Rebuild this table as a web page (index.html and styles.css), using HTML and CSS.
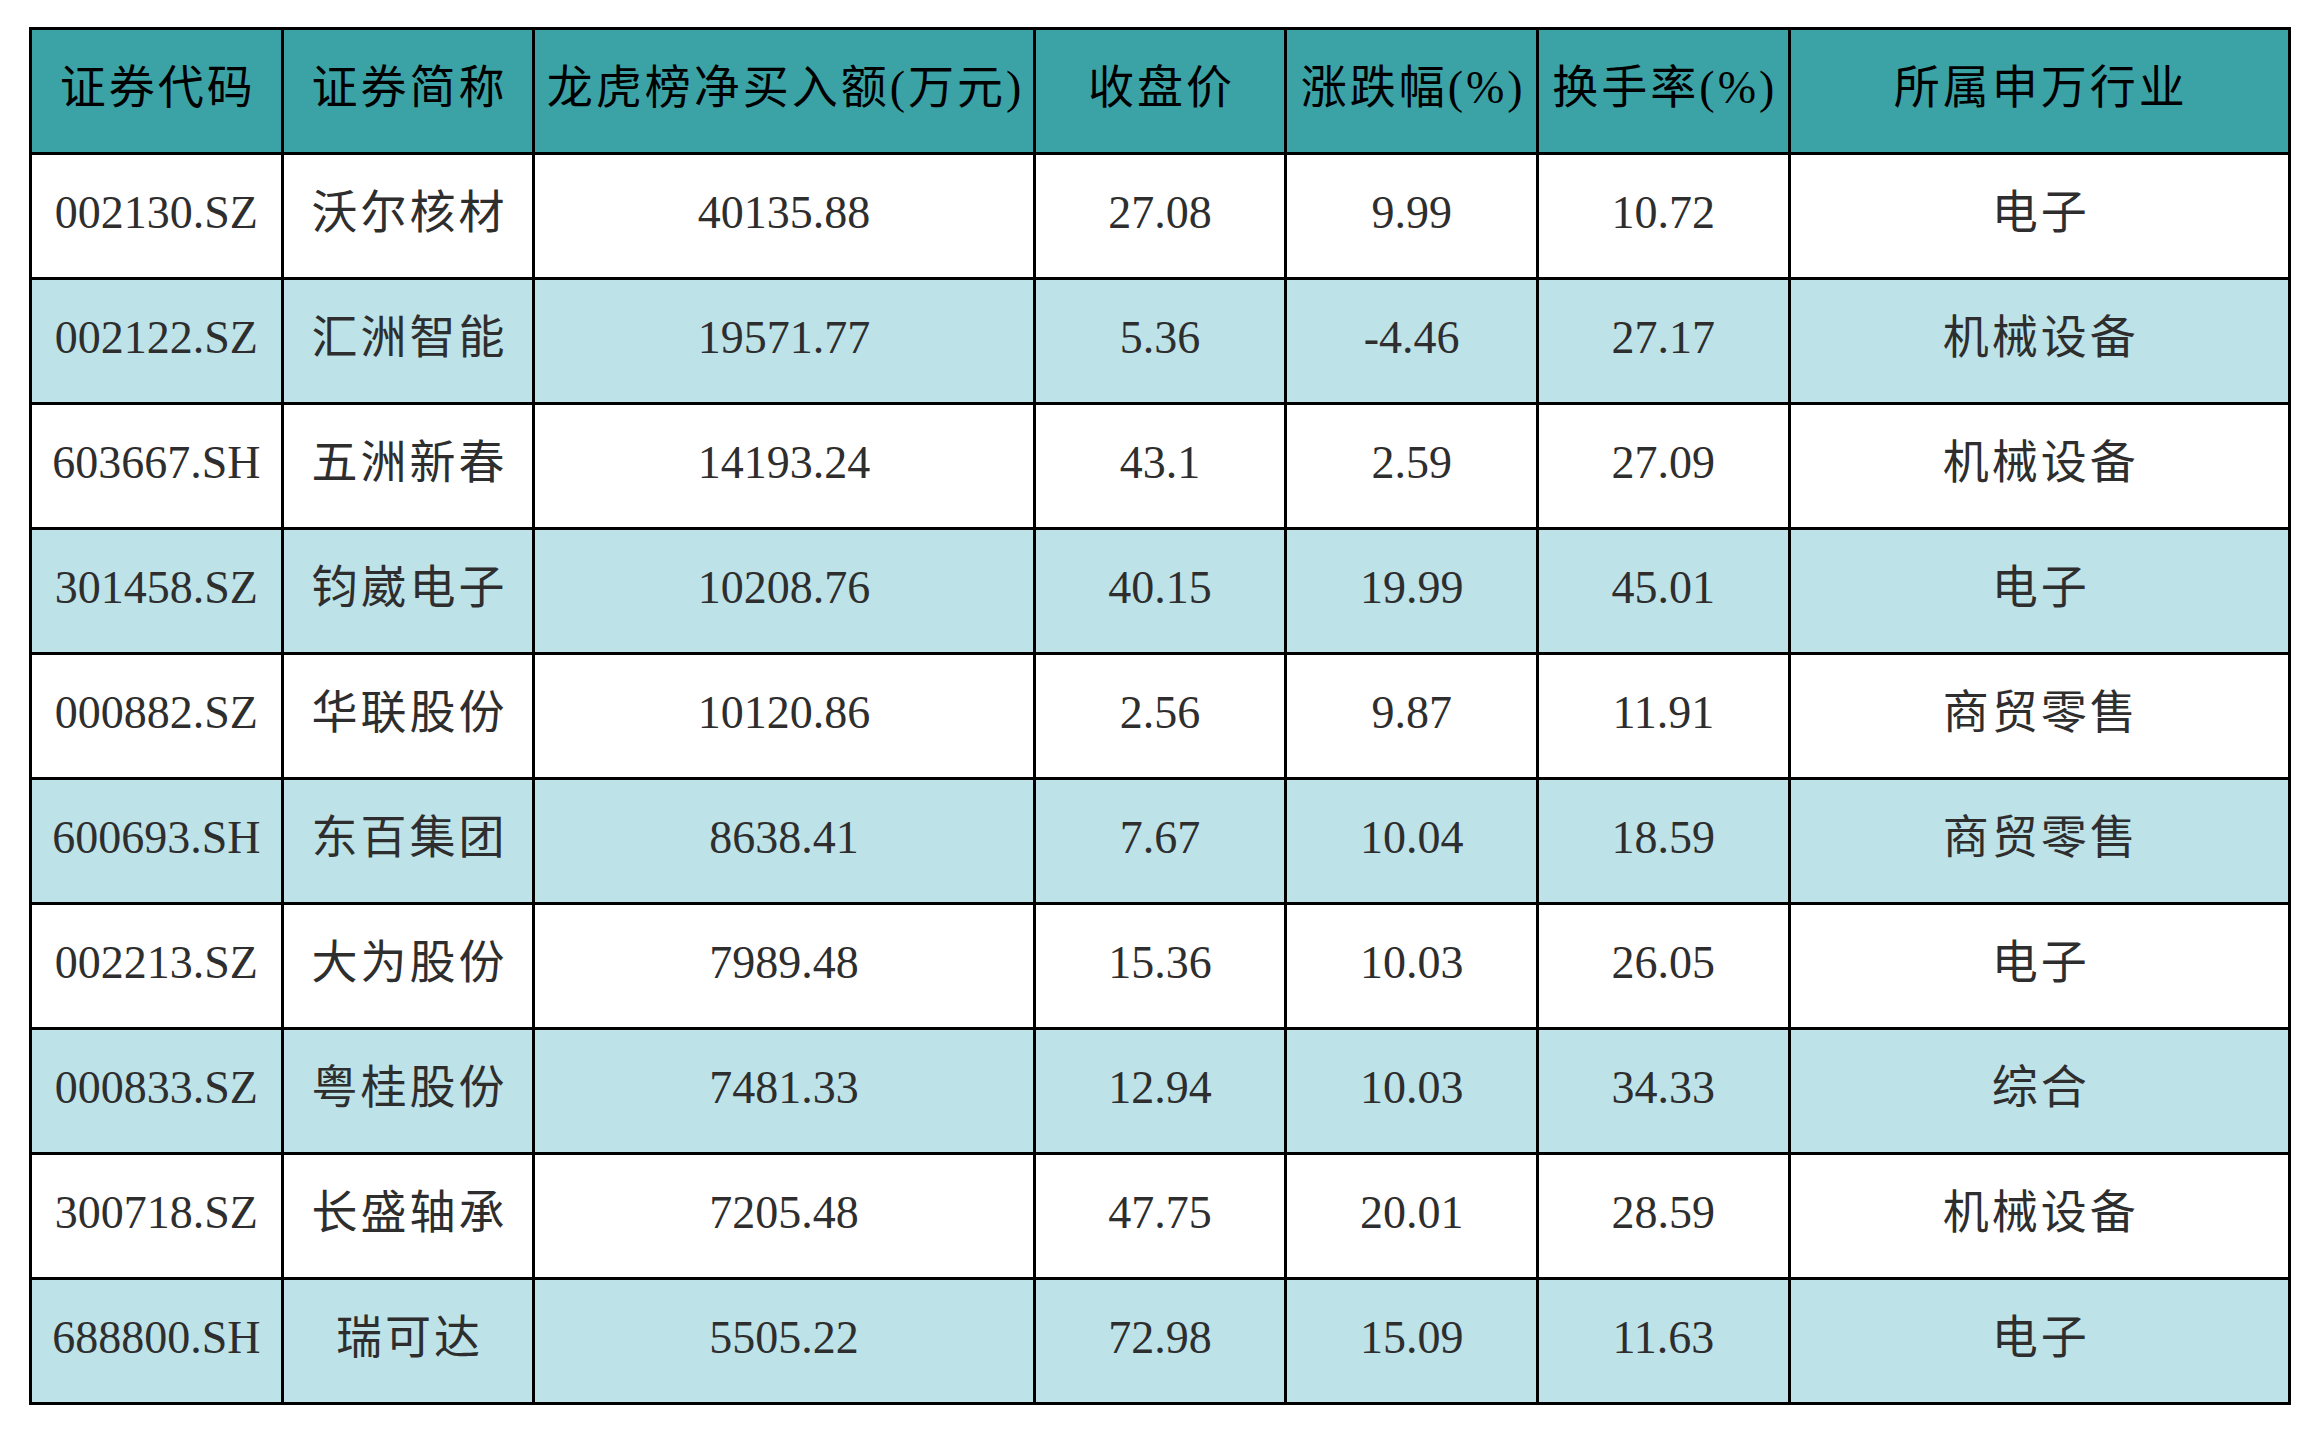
FILE: index.html
```html
<!DOCTYPE html>
<html lang="zh-CN">
<head>
<meta charset="utf-8">
<title>龙虎榜净买入额</title>
<link rel="stylesheet" href="styles.css">
</head>
<body>
<div class="table">
  <div class="cell head cjk">证券代码</div>
  <div class="cell head cjk">证券简称</div>
  <div class="cell head cjk">龙虎榜净买入额(万元)</div>
  <div class="cell head cjk">收盘价</div>
  <div class="cell head cjk">涨跌幅(%)</div>
  <div class="cell head cjk">换手率(%)</div>
  <div class="cell head cjk">所属申万行业</div>

  <div class="cell">002130.SZ</div><div class="cell cjk">沃尔核材</div><div class="cell">40135.88</div><div class="cell">27.08</div><div class="cell">9.99</div><div class="cell">10.72</div><div class="cell cjk">电子</div>
  <div class="cell alt">002122.SZ</div><div class="cell alt cjk">汇洲智能</div><div class="cell alt">19571.77</div><div class="cell alt">5.36</div><div class="cell alt">-4.46</div><div class="cell alt">27.17</div><div class="cell alt cjk">机械设备</div>
  <div class="cell">603667.SH</div><div class="cell cjk">五洲新春</div><div class="cell">14193.24</div><div class="cell">43.1</div><div class="cell">2.59</div><div class="cell">27.09</div><div class="cell cjk">机械设备</div>
  <div class="cell alt">301458.SZ</div><div class="cell alt cjk">钧崴电子</div><div class="cell alt">10208.76</div><div class="cell alt">40.15</div><div class="cell alt">19.99</div><div class="cell alt">45.01</div><div class="cell alt cjk">电子</div>
  <div class="cell">000882.SZ</div><div class="cell cjk">华联股份</div><div class="cell">10120.86</div><div class="cell">2.56</div><div class="cell">9.87</div><div class="cell">11.91</div><div class="cell cjk">商贸零售</div>
  <div class="cell alt">600693.SH</div><div class="cell alt cjk">东百集团</div><div class="cell alt">8638.41</div><div class="cell alt">7.67</div><div class="cell alt">10.04</div><div class="cell alt">18.59</div><div class="cell alt cjk">商贸零售</div>
  <div class="cell">002213.SZ</div><div class="cell cjk">大为股份</div><div class="cell">7989.48</div><div class="cell">15.36</div><div class="cell">10.03</div><div class="cell">26.05</div><div class="cell cjk">电子</div>
  <div class="cell alt">000833.SZ</div><div class="cell alt cjk">粤桂股份</div><div class="cell alt">7481.33</div><div class="cell alt">12.94</div><div class="cell alt">10.03</div><div class="cell alt">34.33</div><div class="cell alt cjk">综合</div>
  <div class="cell">300718.SZ</div><div class="cell cjk">长盛轴承</div><div class="cell">7205.48</div><div class="cell">47.75</div><div class="cell">20.01</div><div class="cell">28.59</div><div class="cell cjk">机械设备</div>
  <div class="cell alt">688800.SH</div><div class="cell alt cjk">瑞可达</div><div class="cell alt">5505.22</div><div class="cell alt">72.98</div><div class="cell alt">15.09</div><div class="cell alt">11.63</div><div class="cell alt cjk">电子</div>
</div>
</body>
</html>
```

FILE: styles.css
```css
html, body {
  margin: 0;
  padding: 0;
  background: #ffffff;
}

body {
  padding: 27px 0 0 29px;
  font-family: "Liberation Serif", "Noto Sans CJK SC", serif;
}

.table {
  width: 2262px;
  box-sizing: border-box;
  display: grid;
  grid-template-columns: 1fr 1fr 2fr 1fr 1fr 1fr 2fr;
  grid-template-rows: 122px repeat(10, 122px);
  gap: 3px;
  padding: 3px;
  background: #000000;
}

.cell {
  background: #ffffff;
  color: #2e2e2e;
  font-size: 46px;
  line-height: 1;
  display: flex;
  align-items: center;
  justify-content: center;
  white-space: nowrap;
  box-sizing: border-box;
  padding-bottom: 6px;
}

.cell.alt {
  background: #bde2e8;
}

.cell.head {
  background: #3ba3a6;
  color: #000000;
  padding-bottom: 6px;
}

.cjk {
  letter-spacing: 3px;
  padding-left: 3px;
}
```
